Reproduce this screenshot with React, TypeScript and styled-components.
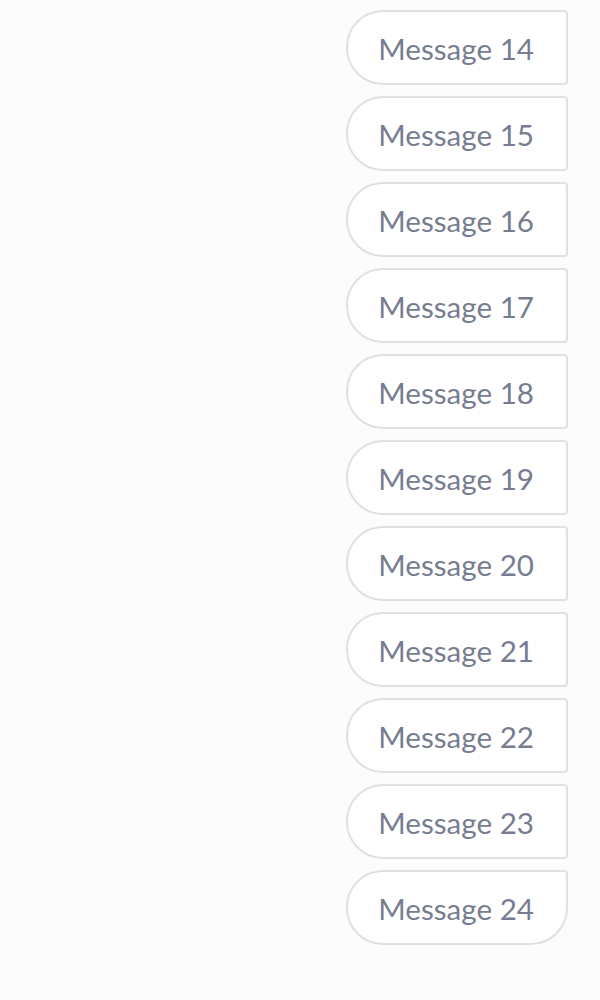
import React from 'react'
import styled, {createGlobalStyle} from 'styled-components'

const Global = createGlobalStyle`
  html, body {
    margin: 0;
    background: #fcfcfc;
    font-family: Lato, "Noto Sans", sans-serif;
  }
`

const Thread = styled.div`
  display: flex;
  flex-direction: column;
  align-items: flex-end;
  gap: 11px;
  padding: 10px 32px 0 0;
`

const Bubble = styled.div<{ last?: boolean }>`
  box-sizing: border-box;
  height: 75px;
  display: flex;
  align-items: center;
  padding: 2px 32px 0 30px;
  background: #fff;
  border: 2px solid #dfe0e3;
  border-radius: ${p => p.last ? '37px 4px 37px 37px' : '37px 4px 4px 37px'};
  color: #777d90;
  font-size: 29.6px;
`

const messages = Array.from({length: 11}, (_, i) => `Message ${i + 14}`)

export default function App() {
    return (
        <>
            <Global/>
            <Thread>
                {messages.map((m, i) =>
                    <Bubble key={m} last={i === messages.length - 1}>{m}</Bubble>
                )}
            </Thread>
        </>
    )
}
